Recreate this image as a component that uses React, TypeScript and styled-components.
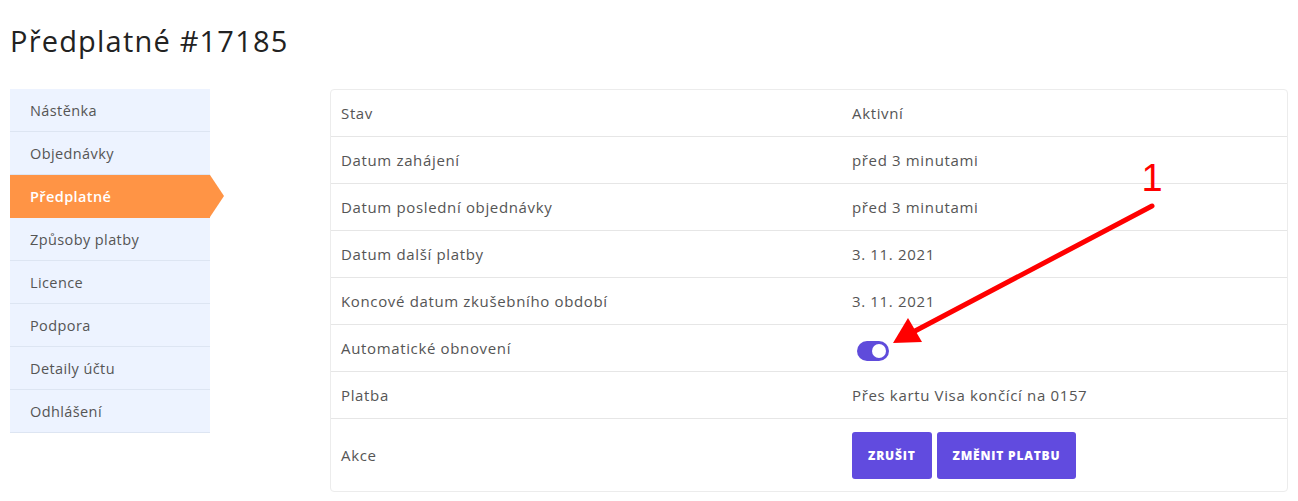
import React from "react";
import styled, { createGlobalStyle } from "styled-components";

const GlobalStyle = createGlobalStyle`
  html, body {
    margin: 0;
    padding: 0;
    background: #fff;
    font-family: "Open Sans", "Noto Sans", sans-serif;
  }
`;

const Page = styled.div`
  position: relative;
  width: 1298px;
  height: 501px;
  padding: 0 10px;
  box-sizing: border-box;
`;

const Title = styled.h1`
  margin: 0;
  padding-top: 21px;
  height: 89px;
  box-sizing: border-box;
  font-size: 29px;
  font-weight: 500;
  color: #222;
  letter-spacing: 1.2px;
`;

const Body = styled.div`
  display: flex;
  align-items: flex-start;
  gap: 120px;
`;

const Menu = styled.nav`
  width: 200px;
  display: flex;
  flex-direction: column;
`;

const MenuItem = styled.div<{ $active?: boolean }>`
  position: relative;
  height: 43px;
  box-sizing: border-box;
  padding-left: 20px;
  display: flex;
  align-items: center;
  font-size: 14.5px;
  letter-spacing: 0.4px;
  color: ${(p) => (p.$active ? "#fff" : "#555")};
  font-weight: ${(p) => (p.$active ? 600 : 400)};
  background: ${(p) => (p.$active ? "#ff9445" : "#edf3ff")};
  border-bottom: 1px solid ${(p) => (p.$active ? "#ff9445" : "#dde5f2")};

  ${(p) =>
    p.$active &&
    `
    &::after {
      content: "";
      position: absolute;
      right: -14px;
      top: 0;
      border-top: 21.5px solid transparent;
      border-bottom: 21.5px solid transparent;
      border-left: 14px solid #ff9445;
    }
  `}
`;

const Table = styled.div`
  flex: 1;
  border: 1px solid #ececec;
  border-radius: 4px;
  overflow: hidden;
`;

const Row = styled.div<{ $tall?: boolean }>`
  display: grid;
  grid-template-columns: 511px 1fr;
  height: ${(p) => (p.$tall ? "72px" : "47px")};
  box-sizing: border-box;
  border-bottom: 1px solid #e6e6e6;
  &:last-child {
    border-bottom: none;
  }
`;

const Cell = styled.div`
  display: flex;
  align-items: center;
  gap: 5px;
  padding: 0 10px;
  font-size: 15px;
  letter-spacing: 0.65px;
  color: #555;
`;

const Toggle = styled.span`
  position: relative;
  width: 32px;
  height: 20px;
  margin-left: 5px;
  margin-top: 6px;
  border-radius: 10px;
  background: #5f4bdb;
  &::after {
    content: "";
    position: absolute;
    right: 3px;
    top: 3px;
    width: 14px;
    height: 14px;
    border-radius: 50%;
    background: #fff;
  }
`;

const Button = styled.button`
  height: 47px;
  padding: 0 16px;
  border: none;
  border-radius: 3px;
  background: #614bdf;
  color: #fff;
  font-family: "Open Sans", sans-serif;
  font-size: 12px;
  font-weight: 800;
  letter-spacing: 0.8px;
  cursor: pointer;
`;

const Annotation = styled.svg`
  position: absolute;
  left: 0;
  top: 0;
  pointer-events: none;
`;

const menu = [
  "Nástěnka",
  "Objednávky",
  "Předplatné",
  "Způsoby platby",
  "Licence",
  "Podpora",
  "Detaily účtu",
  "Odhlášení",
];

const rows = [
  ["Stav", "Aktivní"],
  ["Datum zahájení", "před 3 minutami"],
  ["Datum poslední objednávky", "před 3 minutami"],
  ["Datum další platby", "3. 11. 2021"],
  ["Koncové datum zkušebního období", "3. 11. 2021"],
];

export default function App() {
  return (
    <Page>
      <GlobalStyle />
      <Title>Předplatné #17185</Title>
      <Body>
        <Menu>
          {menu.map((m) => (
            <MenuItem key={m} $active={m === "Předplatné"}>
              {m}
            </MenuItem>
          ))}
        </Menu>
        <Table>
          {rows.map(([k, v]) => (
            <Row key={k}>
              <Cell>{k}</Cell>
              <Cell>{v}</Cell>
            </Row>
          ))}
          <Row>
            <Cell>Automatické obnovení</Cell>
            <Cell>
              <Toggle />
            </Cell>
          </Row>
          <Row>
            <Cell>Platba</Cell>
            <Cell>Přes kartu Visa končící na 0157</Cell>
          </Row>
          <Row $tall>
            <Cell>Akce</Cell>
            <Cell>
              <Button>ZRUŠIT</Button>
              <Button>ZMĚNIT PLATBU</Button>
            </Cell>
          </Row>
        </Table>
      </Body>
      <Annotation width="1298" height="501" viewBox="0 0 1298 501">
        <text
          x="1152"
          y="191"
          textAnchor="middle"
          fill="#ff0000"
          fontSize="38"
          fontFamily="Liberation Sans, sans-serif"
        >
          1
        </text>
        <line x1="1152" y1="206" x2="915" y2="331" stroke="#ff0000" strokeWidth="5" strokeLinecap="round" />
        <polygon points="893,343 908,318 922,342" fill="#ff0000" />
      </Annotation>
    </Page>
  );
}
